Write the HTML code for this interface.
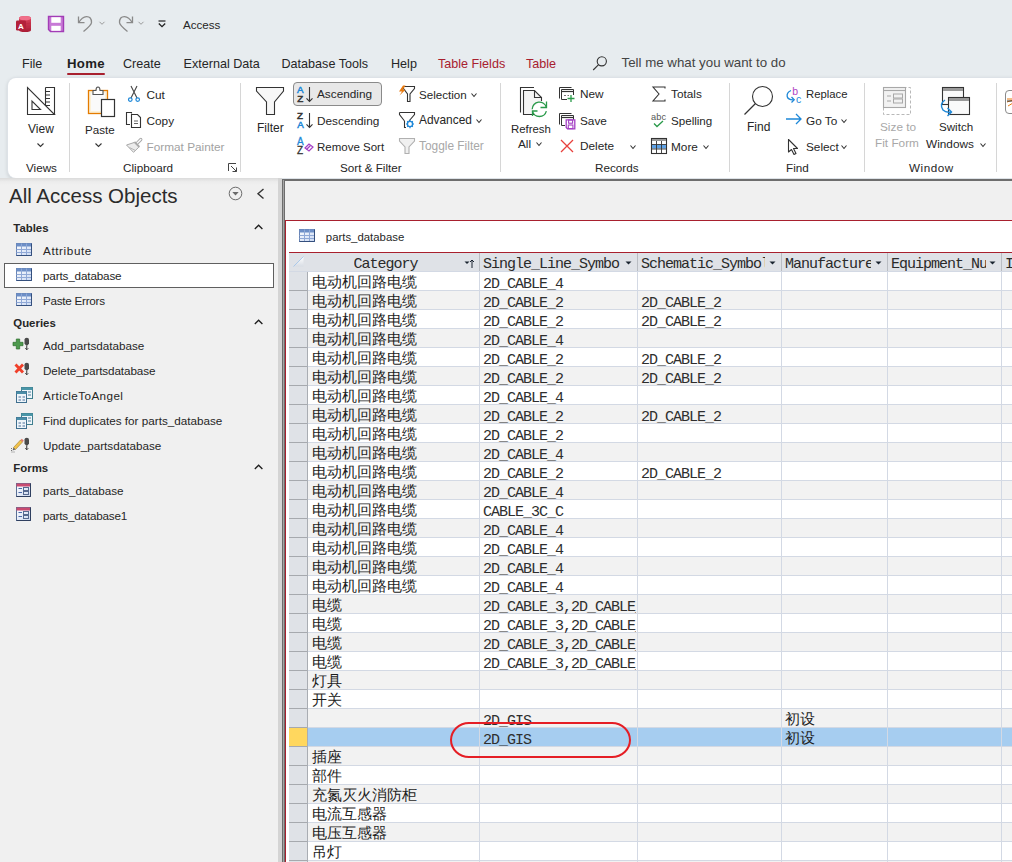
<!DOCTYPE html>
<html><head><meta charset="utf-8"><style>
html,body{margin:0;padding:0;}
body{width:1012px;height:862px;overflow:hidden;position:relative;background:#e7ecef;font-family:"Liberation Sans",sans-serif;}
.t{position:absolute;white-space:nowrap;line-height:0;height:0;}
svg{overflow:visible}
</style></head><body>
<svg style="position:absolute;left:15px;top:15px;" width="17" height="18" viewBox="0 0 17 18">
<defs><linearGradient id="ag" x1="0" x2="0" y1="0" y2="1"><stop offset="0" stop-color="#e0465e"/><stop offset="1" stop-color="#a81c34"/></linearGradient></defs>
<path d="M4 3.2 Q4 1 10 1 Q16 1 16 3.2 L16 15 Q16 17 10 17 Q4 17 4 15 Z" fill="url(#ag)"/>
<ellipse cx="10" cy="3.2" rx="6" ry="2.2" fill="#f0708a"/>
<path d="M4 8 Q10 10 16 8 M4 12 Q10 14 16 12" fill="none" stroke="#c02a44" stroke-width="0.8"/>
<rect x="1" y="5.5" width="10" height="10" rx="1.2" fill="#b3213a"/>
<text x="6" y="13.6" font-size="8" font-weight="bold" fill="#fff" text-anchor="middle" font-family="Liberation Sans">A</text>
</svg>
<svg style="position:absolute;left:47px;top:15px;" width="18" height="18" viewBox="0 0 18 18">
<path d="M1.5 1.5 H16.5 V16.5 H3.5 L1.5 14.5 Z" fill="#c77ad6" stroke="#a23cb6" stroke-width="1.4"/>
<rect x="4.3" y="2.2" width="9.4" height="5.6" fill="#fff"/>
<rect x="4.3" y="10.8" width="9.4" height="5" fill="#fff"/>

</svg>
<svg style="position:absolute;left:76px;top:14px;" width="20" height="20" viewBox="0 0 20 20">
<path d="M2.5 2.5 V8.7 H8.5" fill="none" stroke="#8a8a8a" stroke-width="1.3"/>
<path d="M2.8 8.5 Q6 3 10.5 2.6 Q15.5 2.5 15.5 8.5 Q15.5 11 7.5 17.5" fill="none" stroke="#8a8a8a" stroke-width="1.3"/>
</svg>
<svg style="position:absolute;left:98.5px;top:21px;" width="7" height="5" viewBox="0 0 7 5"><path d="M0.5 0.8 L3 3.3 L5.5 0.8" fill="none" stroke="#9a9a9a" stroke-width="1"/></svg>
<svg style="position:absolute;left:115px;top:14px;" width="20" height="20" viewBox="0 0 20 20">
<path d="M17.5 2.5 V8.7 H11.5" fill="none" stroke="#8a8a8a" stroke-width="1.3"/>
<path d="M17.2 8.5 Q14 3 9.5 2.6 Q4.5 2.5 4.5 8.5 Q4.5 11 12.5 17.5" fill="none" stroke="#8a8a8a" stroke-width="1.3"/>
</svg>
<svg style="position:absolute;left:137.5px;top:21px;" width="7" height="5" viewBox="0 0 7 5"><path d="M0.5 0.8 L3 3.3 L5.5 0.8" fill="none" stroke="#9a9a9a" stroke-width="1"/></svg>
<svg style="position:absolute;left:157px;top:19px;" width="10" height="9" viewBox="0 0 10 9"><path d="M1.5 2 H8.5" stroke="#222" stroke-width="1.2"/><path d="M1.8 4.5 L5 7.7 L8.2 4.5" fill="none" stroke="#222" stroke-width="1.3"/></svg>
<div class="t" style="left:183px;top:24.98px;font-size:11.6px;color:#262626;font-weight:normal;font-family:'Liberation Sans', sans-serif;">Access</div>
<div class="t" style="left:22px;top:63.93px;font-size:12.6px;color:#262626;font-weight:normal;font-family:'Liberation Sans', sans-serif;">File</div>
<div class="t" style="left:67px;top:63.73px;font-size:13.2px;color:#1f1f1f;font-weight:bold;font-family:'Liberation Sans', sans-serif;letter-spacing:0.3px;">Home</div>
<div class="t" style="left:123px;top:63.93px;font-size:12.6px;color:#262626;font-weight:normal;font-family:'Liberation Sans', sans-serif;">Create</div>
<div class="t" style="left:183.5px;top:63.93px;font-size:12.6px;color:#262626;font-weight:normal;font-family:'Liberation Sans', sans-serif;">External Data</div>
<div class="t" style="left:281.5px;top:63.93px;font-size:12.6px;color:#262626;font-weight:normal;font-family:'Liberation Sans', sans-serif;">Database Tools</div>
<div class="t" style="left:391px;top:63.93px;font-size:12.6px;color:#262626;font-weight:normal;font-family:'Liberation Sans', sans-serif;">Help</div>
<div class="t" style="left:438px;top:63.93px;font-size:12.6px;color:#a8202e;font-weight:normal;font-family:'Liberation Sans', sans-serif;">Table Fields</div>
<div class="t" style="left:526px;top:63.93px;font-size:12.6px;color:#a8202e;font-weight:normal;font-family:'Liberation Sans', sans-serif;">Table</div>
<div style="position:absolute;left:67px;top:72.5px;width:38px;height:2.5px;background:#a8202e;border-radius:1.5px"></div>
<svg style="position:absolute;left:592px;top:55px;" width="16" height="16" viewBox="0 0 16 16"><circle cx="9.8" cy="6.3" r="4.6" fill="none" stroke="#333" stroke-width="1.1"/><path d="M6.6 9.6 L1.2 15" stroke="#333" stroke-width="1.1"/></svg>
<div class="t" style="left:621.5px;top:63.39px;font-size:13.3px;color:#444;font-weight:normal;font-family:'Liberation Sans', sans-serif;">Tell me what you want to do</div>
<div style="position:absolute;left:8px;top:78px;width:1030px;height:100px;background:#fff;border-radius:8px;box-shadow:0 0 0 1px #dde2e7, 0 1.5px 4px rgba(0,0,0,0.16)"></div>
<div style="position:absolute;left:69px;top:83px;width:1px;height:89px;background:#d6d6d6"></div>
<div style="position:absolute;left:240px;top:83px;width:1px;height:89px;background:#d6d6d6"></div>
<div style="position:absolute;left:500px;top:83px;width:1px;height:89px;background:#d6d6d6"></div>
<div style="position:absolute;left:729px;top:83px;width:1px;height:89px;background:#d6d6d6"></div>
<div style="position:absolute;left:864px;top:83px;width:1px;height:89px;background:#d6d6d6"></div>
<div style="position:absolute;left:996px;top:83px;width:1px;height:89px;background:#d6d6d6"></div>
<div class="t" style="left:26px;top:167.95px;font-size:11.7px;color:#262626;font-weight:normal;font-family:'Liberation Sans', sans-serif;">Views</div>
<div class="t" style="left:123px;top:167.95px;font-size:11.7px;color:#262626;font-weight:normal;font-family:'Liberation Sans', sans-serif;">Clipboard</div>
<div class="t" style="left:340px;top:167.95px;font-size:11.7px;color:#262626;font-weight:normal;font-family:'Liberation Sans', sans-serif;">Sort &amp; Filter</div>
<div class="t" style="left:595px;top:167.95px;font-size:11.7px;color:#262626;font-weight:normal;font-family:'Liberation Sans', sans-serif;">Records</div>
<div class="t" style="left:786px;top:167.95px;font-size:11.7px;color:#262626;font-weight:normal;font-family:'Liberation Sans', sans-serif;">Find</div>
<div class="t" style="left:909px;top:167.95px;font-size:11.7px;color:#262626;font-weight:normal;font-family:'Liberation Sans', sans-serif;letter-spacing:0.5px;">Window</div>
<svg style="position:absolute;left:26px;top:86px;" width="30" height="30" viewBox="0 0 30 30">
<path d="M1.5 1.5 V28.5 H28.5 Z" fill="#fff" stroke="#333" stroke-width="1.1"/>
<path d="M6 15 V23.5 H14.5 Z" fill="#fff" stroke="#333" stroke-width="1.1"/>
<path d="M19.5 1.5 H28.5 V28.5" fill="none" stroke="#333" stroke-width="1.1"/>
<path d="M19.5 1.5 V19" fill="none" stroke="#333" stroke-width="1.1"/>
<path d="M19.5 5.5 H24 M19.5 9 H24 M19.5 12.5 H24 M19.5 16 H24 M19.5 19.5 H24" stroke="#333" stroke-width="1"/>
</svg>
<div class="t" style="left:28px;top:129.44px;font-size:12px;color:#262626;font-weight:normal;font-family:'Liberation Sans', sans-serif;">View</div>
<svg style="position:absolute;left:37px;top:142.5px;" width="7" height="4" viewBox="0 0 7 4"><path d="M0.5 0.5 L3.5 3.5 L6.5 0.5" fill="none" stroke="#333" stroke-width="1.1"/></svg>
<svg style="position:absolute;left:87px;top:86px;" width="30" height="32" viewBox="0 0 30 32">
<rect x="1.5" y="4.5" width="19" height="23" fill="#fdf1d6" stroke="#e47b00" stroke-width="1.3"/>
<rect x="4" y="7" width="14" height="18" fill="#fafafa" stroke="none"/>
<path d="M6 8.5 V4.5 H9 Q9 1 11 1 Q13 1 13 4.5 H16 V8.5 Z" fill="#fff" stroke="#555" stroke-width="1.1"/>
<rect x="14.5" y="13.5" width="13" height="17" fill="#fff" stroke="#333" stroke-width="1.2"/>
</svg>
<div class="t" style="left:85px;top:129.58px;font-size:11.6px;color:#262626;font-weight:normal;font-family:'Liberation Sans', sans-serif;">Paste</div>
<svg style="position:absolute;left:94.5px;top:142.5px;" width="7" height="4" viewBox="0 0 7 4"><path d="M0.5 0.5 L3.5 3.5 L6.5 0.5" fill="none" stroke="#333" stroke-width="1.1"/></svg>
<svg style="position:absolute;left:127px;top:85px;" width="14" height="18" viewBox="0 0 14 18">
<path d="M4 1 L10 13 M10 1 L4 13" stroke="#444" stroke-width="1.1"/>
<circle cx="3.3" cy="14.6" r="1.8" fill="none" stroke="#1e88d8" stroke-width="1.2"/>
<circle cx="10.7" cy="14.6" r="1.8" fill="none" stroke="#1e88d8" stroke-width="1.2"/>
</svg>
<div class="t" style="left:146.5px;top:94.91px;font-size:11.8px;color:#262626;font-weight:normal;font-family:'Liberation Sans', sans-serif;">Cut</div>
<svg style="position:absolute;left:125px;top:111px;" width="18" height="18" viewBox="0 0 18 18">
<path d="M6.5 2.5 V1.5 H1.5 V13.5 H5" fill="none" stroke="#333" stroke-width="1.1"/>
<path d="M6.5 3.5 H12.5 L15.5 6.5 V16.5 H6.5 Z" fill="#fff" stroke="#333" stroke-width="1.1"/>
<path d="M9 10 H13 M9 12.5 H13" stroke="#555" stroke-width="0.9"/>
</svg>
<div class="t" style="left:146.5px;top:120.91px;font-size:11.8px;color:#262626;font-weight:normal;font-family:'Liberation Sans', sans-serif;">Copy</div>
<svg style="position:absolute;left:125px;top:137px;" width="18" height="18" viewBox="0 0 18 18">
<path d="M12 6.3 L15.8 2.5" stroke="#a8a8a8" stroke-width="3.2" stroke-linecap="round"/>
<path d="M12 6.3 L15.8 2.5" stroke="#fafafa" stroke-width="1.4" stroke-linecap="round"/>
<path d="M9.3 5 L14.3 10" stroke="#a8a8a8" stroke-width="2.2"/>
<path d="M1.5 8 L9.2 5.5 L13.8 10.2 L8.5 15.3 Z" fill="#ececec" stroke="#a8a8a8" stroke-width="1" stroke-linejoin="round"/>
<path d="M4.5 10.5 L10.5 13.5" stroke="#b0b0b0" stroke-width="0.9"/>
</svg>
<div class="t" style="left:146.5px;top:146.61px;font-size:11.8px;color:#a2a2a2;font-weight:normal;font-family:'Liberation Sans', sans-serif;">Format Painter</div>
<svg style="position:absolute;left:228px;top:163px;" width="10" height="10" viewBox="0 0 10 10"><path d="M0.5 8 V0.5 H8" fill="none" stroke="#444" stroke-width="1"/><path d="M3 3 L8.5 8.5 M4.5 8.5 H8.5 V4.5" fill="none" stroke="#444" stroke-width="1"/></svg>
<svg style="position:absolute;left:255px;top:86px;" width="30" height="30" viewBox="0 0 30 30">
<path d="M1.5 1.5 H28.5 V5 L19.5 16 V28.5 H11.5 V16 L1.5 5 Z" fill="#f7f7f7" stroke="#333" stroke-width="1.1"/>
</svg>
<div class="t" style="left:257px;top:128.04px;font-size:12px;color:#262626;font-weight:normal;font-family:'Liberation Sans', sans-serif;">Filter</div>
<div style="position:absolute;left:293px;top:82px;width:89px;height:24px;box-sizing:border-box;background:#e8e8e8;border:1px solid #8a8a8a;border-radius:4px"></div>
<svg style="position:absolute;left:297px;top:86px;" width="15" height="17" viewBox="0 0 15 17"><text x="0" y="7.3" font-size="9.8" fill="#1e88d8" font-family="Liberation Sans" stroke="#1e88d8" stroke-width="0.5">A</text><text x="0.3" y="16" font-size="9.8" fill="#333" font-family="Liberation Sans" stroke="#333" stroke-width="0.5">Z</text><path d="M12.5 1 V15.5 M9.5 12.3 L12.5 15.5 L15.5 12.3" fill="none" stroke="#333" stroke-width="1.1"/></svg>
<div class="t" style="left:317px;top:93.91px;font-size:11.8px;color:#262626;font-weight:normal;font-family:'Liberation Sans', sans-serif;">Ascending</div>
<svg style="position:absolute;left:297px;top:112px;" width="15" height="17" viewBox="0 0 15 17"><text x="0" y="7.3" font-size="9.8" fill="#333" font-family="Liberation Sans" stroke="#333" stroke-width="0.5">Z</text><text x="0.3" y="16" font-size="9.8" fill="#1e88d8" font-family="Liberation Sans" stroke="#1e88d8" stroke-width="0.5">A</text><path d="M12.5 1 V15.5 M9.5 12.3 L12.5 15.5 L15.5 12.3" fill="none" stroke="#333" stroke-width="1.1"/></svg>
<div class="t" style="left:317px;top:120.61px;font-size:11.8px;color:#262626;font-weight:normal;font-family:'Liberation Sans', sans-serif;">Descending</div>
<svg style="position:absolute;left:297px;top:138px;" width="17" height="17" viewBox="0 0 17 17"><text x="0" y="7.2" font-size="10" fill="#1e88d8" stroke="#1e88d8" stroke-width="0.3" font-family="Liberation Sans">A</text><text x="0" y="16.2" font-size="10" fill="#333" stroke="#333" stroke-width="0.3" font-family="Liberation Sans">Z</text>
<path d="M8 10 L12 6 L16 9 L12 13 Z" fill="#fff" stroke="#a33fc4" stroke-width="1.2"/><path d="M9.5 11.5 L13.5 7.5" stroke="#a33fc4" stroke-width="1.2"/></svg>
<div class="t" style="left:317px;top:146.62px;font-size:11.5px;color:#262626;font-weight:normal;font-family:'Liberation Sans', sans-serif;">Remove Sort</div>
<svg style="position:absolute;left:398px;top:85px;" width="18" height="18" viewBox="0 0 18 18">
<path d="M5.5 1.5 H16.5 V3.5 L12 9 V16.5 H9.5 V9 L5.5 3.5 Z" fill="#fff" stroke="#333" stroke-width="1.1"/>
<path d="M5 0.5 L1 6.5 H4 L1.5 10.5 L7.5 4.8 H4.8 L7.5 0.5 Z" fill="#e87a10"/>
</svg>
<div class="t" style="left:419px;top:94.58px;font-size:11.6px;color:#262626;font-weight:normal;font-family:'Liberation Sans', sans-serif;">Selection</div>
<svg style="position:absolute;left:470.5px;top:93px;" width="6" height="4" viewBox="0 0 6 4"><path d="M0.5 0.5 L3.0 3.5 L5.5 0.5" fill="none" stroke="#333" stroke-width="1.1"/></svg>
<svg style="position:absolute;left:398px;top:111px;" width="18" height="18" viewBox="0 0 18 18">
<path d="M1.5 1.5 H16.5 V3.5 L11 10 M6.5 10 L1.5 3.5 V1.5" fill="#fff" stroke="#333" stroke-width="1.1"/>
<path d="M6.5 10 V16.5 H8" fill="none" stroke="#333" stroke-width="1.1"/>
<circle cx="12" cy="13" r="2.6" fill="none" stroke="#1e88d8" stroke-width="1.4"/>
<path d="M12 8.8 V10 M12 16 V17.2 M8 13 H9.2 M14.8 13 H16 M9.2 10.2 L10 11 M14 15 L14.8 15.8 M14.8 10.2 L14 11 M10 15 L9.2 15.8" stroke="#1e88d8" stroke-width="1.2"/>
</svg>
<div class="t" style="left:419px;top:120.48px;font-size:11.9px;color:#262626;font-weight:normal;font-family:'Liberation Sans', sans-serif;">Advanced</div>
<svg style="position:absolute;left:475.5px;top:119px;" width="6" height="4" viewBox="0 0 6 4"><path d="M0.5 0.5 L3.0 3.5 L5.5 0.5" fill="none" stroke="#333" stroke-width="1.1"/></svg>
<svg style="position:absolute;left:398px;top:137px;" width="18" height="18" viewBox="0 0 18 18">
<path d="M1.5 1.5 H16.5 V4 L11 10 V16.5 H7 V10 L1.5 4 Z" fill="#f0f0f0" stroke="#b0b0b0" stroke-width="1.1"/>
</svg>
<div class="t" style="left:419px;top:146.48px;font-size:11.9px;color:#a8a8a8;font-weight:normal;font-family:'Liberation Sans', sans-serif;">Toggle Filter</div>
<svg style="position:absolute;left:519px;top:86px;" width="30" height="32" viewBox="0 0 30 32">
<path d="M1.5 26.5 V1.5 H15" fill="none" stroke="#333" stroke-width="1.1"/>
<path d="M4.5 4.5 H15.5 L22.5 11.5 V16 Q14 17 12 28.5 H4.5 Z" fill="#f4f4f4"/>
<path d="M15 28.5 H4.5 V4.5 H15.5 L22.5 11.5 V15" fill="none" stroke="#333" stroke-width="1.1"/>
<path d="M15.5 4.5 V11.5 H22.5" fill="none" stroke="#333" stroke-width="1.1"/>
<path d="M13.2 23.3 A7.2 7.2 0 0 1 27.35 21.4" fill="none" stroke="#2a9a4a" stroke-width="1.3"/>
<path d="M27.35 25.2 A7.2 7.2 0 0 1 13.45 25.2" fill="none" stroke="#2a9a4a" stroke-width="1.3"/>
<path d="M27.5 15.5 V21.5 H21.5" fill="none" stroke="#2a9a4a" stroke-width="1.3"/>
<path d="M13.5 30 V25 H18.5" fill="none" stroke="#2a9a4a" stroke-width="1.3"/>
</svg>
<div class="t" style="left:511px;top:128.55px;font-size:11.4px;color:#262626;font-weight:normal;font-family:'Liberation Sans', sans-serif;">Refresh</div>
<div class="t" style="left:518px;top:144.31px;font-size:11.8px;color:#262626;font-weight:normal;font-family:'Liberation Sans', sans-serif;">All</div>
<svg style="position:absolute;left:535.5px;top:142px;" width="6" height="4" viewBox="0 0 6 4"><path d="M0.5 0.5 L3.0 3.5 L5.5 0.5" fill="none" stroke="#333" stroke-width="1.1"/></svg>
<svg style="position:absolute;left:558px;top:86px;" width="18" height="17" viewBox="0 0 18 17">
<path d="M1.5 12.5 V1.5 H13.5" fill="none" stroke="#333" stroke-width="1"/>
<path d="M3.5 3.5 H15.5 V9 M9 13.5 H3.5 V3.5" fill="#fff" stroke="#333" stroke-width="1"/>
<path d="M3.5 5.5 H15.5" stroke="#333" stroke-width="1.2"/>
<path d="M6 9.5 H8 M9.5 9.5 H11" stroke="#666" stroke-width="0.9"/>
<path d="M13 9 V16 M9.5 12.5 H16.5" stroke="#2a9a4a" stroke-width="1.3"/>
</svg>
<div class="t" style="left:580px;top:93.91px;font-size:11.8px;color:#262626;font-weight:normal;font-family:'Liberation Sans', sans-serif;">New</div>
<svg style="position:absolute;left:558px;top:112px;" width="18" height="17" viewBox="0 0 18 17">
<path d="M1.5 12.5 V1.5 H13.5" fill="none" stroke="#333" stroke-width="1"/>
<path d="M3.5 3.5 H15.5 V8 M7 13.5 H3.5 V3.5" fill="#fff" stroke="#333" stroke-width="1"/>
<path d="M3.5 5.5 H15.5" stroke="#333" stroke-width="1.2"/>
<path d="M8.2 7.8 H16.8 V16.8 H9.5 L8.2 15.5 Z" fill="#fff" stroke="#a33fc4" stroke-width="1.3"/>
<rect x="10.6" y="8" width="4" height="3.2" fill="none" stroke="#a33fc4" stroke-width="1.1"/>
<rect x="10.3" y="13" width="4.6" height="3.6" fill="none" stroke="#a33fc4" stroke-width="1.1"/>
</svg>
<div class="t" style="left:580px;top:120.51px;font-size:11.8px;color:#262626;font-weight:normal;font-family:'Liberation Sans', sans-serif;">Save</div>
<svg style="position:absolute;left:560px;top:139px;" width="14" height="14" viewBox="0 0 14 14"><path d="M1 1 L13 13 M13 1 L1 13" stroke="#e8403c" stroke-width="1.3"/></svg>
<div class="t" style="left:580px;top:146.41px;font-size:11.8px;color:#262626;font-weight:normal;font-family:'Liberation Sans', sans-serif;">Delete</div>
<svg style="position:absolute;left:630px;top:145px;" width="6" height="4" viewBox="0 0 6 4"><path d="M0.5 0.5 L3.0 3.5 L5.5 0.5" fill="none" stroke="#333" stroke-width="1.1"/></svg>
<svg style="position:absolute;left:652px;top:86px;" width="14" height="16" viewBox="0 0 14 16"><path d="M13 2.5 V1 H1 L7 8 L1 15 H13 V13.5" fill="none" stroke="#333" stroke-width="1.1"/></svg>
<div class="t" style="left:671px;top:93.91px;font-size:11.8px;color:#262626;font-weight:normal;font-family:'Liberation Sans', sans-serif;">Totals</div>
<svg style="position:absolute;left:651px;top:112px;" width="17" height="17" viewBox="0 0 17 17"><text x="0" y="7.5" font-size="9.2" fill="#555" font-family="Liberation Sans" textLength="15">abc</text>
<path d="M3 11.5 L6 14.5 L12 9" fill="none" stroke="#2a9a4a" stroke-width="1.3"/></svg>
<div class="t" style="left:671px;top:120.58px;font-size:11.6px;color:#262626;font-weight:normal;font-family:'Liberation Sans', sans-serif;">Spelling</div>
<svg style="position:absolute;left:650px;top:137px;" width="18" height="18" viewBox="0 0 18 18">
<rect x="1.5" y="1.5" width="15" height="15" fill="#fff" stroke="#333" stroke-width="1.1"/>
<rect x="2" y="2" width="14" height="2" fill="#999"/>
<rect x="2" y="8" width="14" height="3.5" fill="#5ea2e6"/>
<path d="M1.5 7.5 H16.5 M1.5 12 H16.5 M6.5 4 V16.5 M11.5 4 V16.5" stroke="#333" stroke-width="0.9"/>
</svg>
<div class="t" style="left:671px;top:146.51px;font-size:11.8px;color:#262626;font-weight:normal;font-family:'Liberation Sans', sans-serif;">More</div>
<svg style="position:absolute;left:703px;top:145px;" width="6" height="4" viewBox="0 0 6 4"><path d="M0.5 0.5 L3.0 3.5 L5.5 0.5" fill="none" stroke="#333" stroke-width="1.1"/></svg>
<svg style="position:absolute;left:743px;top:86px;" width="32" height="32" viewBox="0 0 32 32">
<circle cx="19.5" cy="10.5" r="10" fill="#fff" stroke="#333" stroke-width="1.1"/>
<path d="M12.5 17.5 L1.5 28.5" stroke="#333" stroke-width="1.2"/>
</svg>
<div class="t" style="left:747px;top:126.84px;font-size:12px;color:#262626;font-weight:normal;font-family:'Liberation Sans', sans-serif;">Find</div>
<svg style="position:absolute;left:785px;top:85px;" width="18" height="19" viewBox="0 0 18 19">
<path d="M6 5.5 Q1.5 7.5 2.2 11.5 Q3 15 8.5 14.8" fill="none" stroke="#1e88d8" stroke-width="1.3"/>
<path d="M6.5 12 L9.2 14.8 L6.5 17.5" fill="none" stroke="#1e88d8" stroke-width="1.3"/>
<text x="7.2" y="9.5" font-size="10.5" fill="#b03fc4" font-family="Liberation Sans">b</text>
<text x="11" y="18" font-size="10.5" fill="#1e88d8" font-family="Liberation Sans">c</text>
</svg>
<div class="t" style="left:806px;top:94.08px;font-size:11.3px;color:#262626;font-weight:normal;font-family:'Liberation Sans', sans-serif;">Replace</div>
<svg style="position:absolute;left:785px;top:112px;" width="18" height="14" viewBox="0 0 18 14"><path d="M1 7 H16 M11 2 L16 7 L11 12" fill="none" stroke="#1e88d8" stroke-width="1.3"/></svg>
<div class="t" style="left:806px;top:120.51px;font-size:11.8px;color:#262626;font-weight:normal;font-family:'Liberation Sans', sans-serif;">Go To</div>
<svg style="position:absolute;left:841px;top:119px;" width="6" height="4" viewBox="0 0 6 4"><path d="M0.5 0.5 L3.0 3.5 L5.5 0.5" fill="none" stroke="#333" stroke-width="1.1"/></svg>
<svg style="position:absolute;left:787px;top:138px;" width="13" height="18" viewBox="0 0 13 18"><path d="M1.5 1.5 V14 L4.5 11.5 L7 16.5 L9 15.5 L6.5 10.5 H10.5 Z" fill="#fff" stroke="#333" stroke-width="1.1" stroke-linejoin="round"/></svg>
<div class="t" style="left:806px;top:146.51px;font-size:11.8px;color:#262626;font-weight:normal;font-family:'Liberation Sans', sans-serif;">Select</div>
<svg style="position:absolute;left:841px;top:145px;" width="6" height="4" viewBox="0 0 6 4"><path d="M0.5 0.5 L3.0 3.5 L5.5 0.5" fill="none" stroke="#333" stroke-width="1.1"/></svg>
<svg style="position:absolute;left:882px;top:86px;" width="30" height="30" viewBox="0 0 30 30">
<rect x="1.5" y="1.5" width="27" height="27" fill="none" stroke="#b8b8b8" stroke-width="1" stroke-dasharray="3 2"/>
<rect x="1.5" y="1.5" width="22" height="20" fill="#f2f2f2" stroke="#a8a8a8" stroke-width="1.1"/>
<path d="M1.5 4.5 H23.5" stroke="#a8a8a8" stroke-width="1.1"/>
<path d="M5 10 H9 M5 15 H9" stroke="#a8a8a8" stroke-width="1"/>
<rect x="11.5" y="8" width="9" height="4" fill="none" stroke="#a8a8a8" stroke-width="1"/>
<rect x="11.5" y="13" width="9" height="4" fill="none" stroke="#a8a8a8" stroke-width="1"/>
</svg>
<div class="t" style="left:880px;top:127.21px;font-size:11.8px;color:#a8a8a8;font-weight:normal;font-family:'Liberation Sans', sans-serif;">Size to</div>
<div class="t" style="left:875px;top:142.91px;font-size:11.8px;color:#a8a8a8;font-weight:normal;font-family:'Liberation Sans', sans-serif;">Fit Form</div>
<svg style="position:absolute;left:939px;top:86px;" width="32" height="32" viewBox="0 0 32 32">
<rect x="3.5" y="1.5" width="21" height="17" fill="#fafafa" stroke="#333" stroke-width="1.1"/>
<rect x="4" y="2" width="20" height="3" fill="#999"/>
<rect x="9.5" y="11.5" width="21" height="17" fill="#fafafa" stroke="#333" stroke-width="1.1"/>
<rect x="10" y="12" width="20" height="3" fill="#999"/>
<path d="M6 14 Q0 18 4 24 Q7 27 12 26" fill="none" stroke="#1e88d8" stroke-width="1.4"/>
<path d="M8.5 22 L12.5 26 L8.5 30" fill="none" stroke="#1e88d8" stroke-width="1.4"/>
</svg>
<div class="t" style="left:939px;top:127.38px;font-size:11.6px;color:#262626;font-weight:normal;font-family:'Liberation Sans', sans-serif;">Switch</div>
<div class="t" style="left:926px;top:143.51px;font-size:11.8px;color:#262626;font-weight:normal;font-family:'Liberation Sans', sans-serif;">Windows</div>
<svg style="position:absolute;left:979.5px;top:142.5px;" width="6" height="4" viewBox="0 0 6 4"><path d="M0.5 0.5 L3.0 3.5 L5.5 0.5" fill="none" stroke="#333" stroke-width="1.1"/></svg>
<div style="position:absolute;left:1005px;top:90px;width:20px;height:24px;box-sizing:border-box;border:1px solid #8a8a8a;border-radius:4px;background:#fff"></div>
<svg style="position:absolute;left:1007px;top:97px;" width="6" height="10" viewBox="0 0 6 10"><path d="M0 2 H6 M0 5 L6 3 M1 9 L6 6" stroke="#e87a10" stroke-width="1"/><path d="M0 4 H6" stroke="#333" stroke-width="1"/></svg>
<div style="position:absolute;left:0px;top:178px;width:278px;height:684px;background:#f0f0f0"></div>
<div style="position:absolute;left:0px;top:178px;width:282px;height:7px;background:linear-gradient(rgba(0,0,0,0.09),rgba(0,0,0,0.02) 50%,rgba(0,0,0,0))"></div>
<div class="t" style="left:9px;top:195.60px;font-size:20.5px;color:#2b2b2b;font-weight:normal;font-family:'Liberation Sans', sans-serif;">All Access Objects</div>
<svg style="position:absolute;left:228px;top:186px;" width="15" height="15" viewBox="0 0 15 15"><circle cx="7.5" cy="7.5" r="6.3" fill="none" stroke="#6b6b6b" stroke-width="1"/><path d="M4.3 6 H10.7 L7.5 9.5 Z" fill="#6b6b6b"/></svg>
<svg style="position:absolute;left:256px;top:188px;" width="9" height="12" viewBox="0 0 9 12"><path d="M7.5 1 L2 5.8 L7.5 10.5" fill="none" stroke="#333" stroke-width="1.4"/></svg>
<div class="t" style="left:13.3px;top:228.05px;font-size:11.4px;color:#262626;font-weight:bold;font-family:'Liberation Sans', sans-serif;">Tables</div>
<svg style="position:absolute;left:253.5px;top:223.5px;" width="11" height="7" viewBox="0 0 11 7"><path d="M0.8 5 L4.6 1.2 L8.4 5" fill="none" stroke="#1e1e1e" stroke-width="1.3"/></svg>
<div class="t" style="left:13.3px;top:323.05px;font-size:11.4px;color:#262626;font-weight:bold;font-family:'Liberation Sans', sans-serif;">Queries</div>
<svg style="position:absolute;left:253.5px;top:318.5px;" width="11" height="7" viewBox="0 0 11 7"><path d="M0.8 5 L4.6 1.2 L8.4 5" fill="none" stroke="#1e1e1e" stroke-width="1.3"/></svg>
<div class="t" style="left:13.3px;top:468.05px;font-size:11.4px;color:#262626;font-weight:bold;font-family:'Liberation Sans', sans-serif;">Forms</div>
<svg style="position:absolute;left:253.5px;top:463.5px;" width="11" height="7" viewBox="0 0 11 7"><path d="M0.8 5 L4.6 1.2 L8.4 5" fill="none" stroke="#1e1e1e" stroke-width="1.3"/></svg>
<div style="position:absolute;left:4px;top:263px;width:270px;height:25px;box-sizing:border-box;background:#fff;border:1px solid #5f5f5f"></div>
<div class="t" style="left:43px;top:250.95px;font-size:11.7px;color:#262626;font-weight:normal;font-family:'Liberation Sans', sans-serif;letter-spacing:0.6px;">Attribute</div>
<svg style="position:absolute;left:16px;top:243px;" width="16" height="13" viewBox="0 0 16 13"><defs><linearGradient id="tg" x1="0" y1="0" x2="1" y2="1"><stop offset="0" stop-color="#ffffff"/><stop offset="1" stop-color="#c9d8f2"/></linearGradient></defs>
<rect x="0.5" y="0.5" width="15" height="12" fill="url(#tg)" stroke="#6a85b5" stroke-width="1"/>
<rect x="0.5" y="0.5" width="15" height="3" fill="#6d8fc7"/>
<path d="M0.5 6.5 H15.5 M0.5 9.5 H15.5 M5.5 0.5 V12.5 M10.5 0.5 V12.5" stroke="#8fa8d6" stroke-width="1"/>
<path d="M0.5 12.5 H15.5 V0.5" fill="none" stroke="#344f7d" stroke-width="1"/></svg>
<div class="t" style="left:43px;top:275.95px;font-size:11.7px;color:#262626;font-weight:normal;font-family:'Liberation Sans', sans-serif;letter-spacing:-0.15px;">parts_database</div>
<svg style="position:absolute;left:16px;top:268px;" width="16" height="13" viewBox="0 0 16 13"><defs><linearGradient id="tg" x1="0" y1="0" x2="1" y2="1"><stop offset="0" stop-color="#ffffff"/><stop offset="1" stop-color="#c9d8f2"/></linearGradient></defs>
<rect x="0.5" y="0.5" width="15" height="12" fill="url(#tg)" stroke="#6a85b5" stroke-width="1"/>
<rect x="0.5" y="0.5" width="15" height="3" fill="#6d8fc7"/>
<path d="M0.5 6.5 H15.5 M0.5 9.5 H15.5 M5.5 0.5 V12.5 M10.5 0.5 V12.5" stroke="#8fa8d6" stroke-width="1"/>
<path d="M0.5 12.5 H15.5 V0.5" fill="none" stroke="#344f7d" stroke-width="1"/></svg>
<div class="t" style="left:43px;top:300.95px;font-size:11.7px;color:#262626;font-weight:normal;font-family:'Liberation Sans', sans-serif;letter-spacing:-0.27px;">Paste Errors</div>
<svg style="position:absolute;left:16px;top:293px;" width="16" height="13" viewBox="0 0 16 13"><defs><linearGradient id="tg" x1="0" y1="0" x2="1" y2="1"><stop offset="0" stop-color="#ffffff"/><stop offset="1" stop-color="#c9d8f2"/></linearGradient></defs>
<rect x="0.5" y="0.5" width="15" height="12" fill="url(#tg)" stroke="#6a85b5" stroke-width="1"/>
<rect x="0.5" y="0.5" width="15" height="3" fill="#6d8fc7"/>
<path d="M0.5 6.5 H15.5 M0.5 9.5 H15.5 M5.5 0.5 V12.5 M10.5 0.5 V12.5" stroke="#8fa8d6" stroke-width="1"/>
<path d="M0.5 12.5 H15.5 V0.5" fill="none" stroke="#344f7d" stroke-width="1"/></svg>
<div class="t" style="left:43px;top:346.45px;font-size:11.7px;color:#262626;font-weight:normal;font-family:'Liberation Sans', sans-serif;">Add_partsdatabase</div>
<svg style="position:absolute;left:12px;top:337px;" width="18" height="14" viewBox="0 0 18 14"><path d="M4.3 2 H7.7 V5.3 H11 V8.7 H7.7 V12 H4.3 V8.7 H1 V5.3 H4.3 Z" fill="#4e9a4e" stroke="#2f6e2f" stroke-width="0.7"/><path d="M12.5 2.5 Q12.5 0.8 14.8 0.8 Q17 0.8 17 2.5 V6.8 L15.3 8.5 H14.2 L12.5 6.8 Z" fill="#4a4a4a"/><path d="M14.75 8.5 V12.5 M13.3 11.3 L14.75 12.8 L16.2 11.3" fill="none" stroke="#333" stroke-width="1"/></svg>
<div class="t" style="left:43px;top:371.45px;font-size:11.7px;color:#262626;font-weight:normal;font-family:'Liberation Sans', sans-serif;letter-spacing:-0.1px;">Delete_partsdatabase</div>
<svg style="position:absolute;left:12px;top:362px;" width="18" height="14" viewBox="0 0 18 14"><path d="M3.5 2.5 L11 10.5 M11 2.5 L3.5 10.5" stroke="#f0402a" stroke-width="2.8"/><path d="M12.5 2.5 Q12.5 0.8 14.8 0.8 Q17 0.8 17 2.5 V6.8 L15.3 8.5 H14.2 L12.5 6.8 Z" fill="#4a4a4a"/><path d="M14.75 8.5 V12.5 M13.3 11.3 L14.75 12.8 L16.2 11.3" fill="none" stroke="#333" stroke-width="1"/></svg>
<div class="t" style="left:43px;top:396.45px;font-size:11.7px;color:#262626;font-weight:normal;font-family:'Liberation Sans', sans-serif;letter-spacing:0.4px;">ArticleToAngel</div>
<svg style="position:absolute;left:16px;top:387px;" width="17" height="16" viewBox="0 0 17 16"><rect x="5.5" y="0.5" width="11" height="11" fill="#eef5fa" stroke="#3f7f8f" stroke-width="1"/><rect x="5.5" y="0.5" width="11" height="2.5" fill="#4a96a8"/>
<path d="M12 5 H15 M12 8 H15" stroke="#4a7f9a" stroke-width="1"/>
<rect x="0.5" y="4.5" width="10" height="11" fill="#eef5fa" stroke="#3f6f8f" stroke-width="1"/><rect x="0.5" y="4.5" width="10" height="2.5" fill="#4a8ea8"/>
<path d="M2.5 10 H5 M6.5 10 H9 M2.5 13 H5 M6.5 13 H9" stroke="#4a6f9a" stroke-width="1"/></svg>
<div class="t" style="left:43px;top:421.45px;font-size:11.7px;color:#262626;font-weight:normal;font-family:'Liberation Sans', sans-serif;">Find duplicates for parts_database</div>
<svg style="position:absolute;left:16px;top:413px;" width="17" height="16" viewBox="0 0 17 16"><rect x="5.5" y="0.5" width="11" height="11" fill="#eef5fa" stroke="#3f7f8f" stroke-width="1"/><rect x="5.5" y="0.5" width="11" height="2.5" fill="#4a96a8"/>
<path d="M12 5 H15 M12 8 H15" stroke="#4a7f9a" stroke-width="1"/>
<rect x="0.5" y="4.5" width="10" height="11" fill="#eef5fa" stroke="#3f6f8f" stroke-width="1"/><rect x="0.5" y="4.5" width="10" height="2.5" fill="#4a8ea8"/>
<path d="M2.5 10 H5 M6.5 10 H9 M2.5 13 H5 M6.5 13 H9" stroke="#4a6f9a" stroke-width="1"/></svg>
<div class="t" style="left:43px;top:446.45px;font-size:11.7px;color:#262626;font-weight:normal;font-family:'Liberation Sans', sans-serif;">Update_partsdatabase</div>
<svg style="position:absolute;left:11px;top:437px;" width="20" height="16" viewBox="0 0 20 16"><path d="M2.5 10.5 L9.5 3 L11.5 5 L4.5 12.5 Z" fill="#f2c24a" stroke="#9a7a2a" stroke-width="0.6"/><path d="M9.5 3 L10.8 1.7 L12.8 3.7 L11.5 5 Z" fill="#e07a6a"/>
<path d="M2.5 10.5 L1.5 13.5 L4.5 12.5" fill="#666"/>
<path d="M0.5 11 V15 M0.5 15 H3.5" stroke="#555" stroke-width="0.8" stroke-dasharray="1 1"/>
<g transform="translate(1,0)"><path d="M12.5 2.5 Q12.5 0.8 14.8 0.8 Q17 0.8 17 2.5 V6.8 L15.3 8.5 H14.2 L12.5 6.8 Z" fill="#4a4a4a"/><path d="M14.75 8.5 V12.5 M13.3 11.3 L14.75 12.8 L16.2 11.3" fill="none" stroke="#333" stroke-width="1"/></g></svg>
<div class="t" style="left:43px;top:491.45px;font-size:11.7px;color:#262626;font-weight:normal;font-family:'Liberation Sans', sans-serif;">parts_database</div>
<svg style="position:absolute;left:16px;top:483px;" width="16" height="15" viewBox="0 0 16 15"><defs><linearGradient id="fg" x1="0" y1="0" x2="1" y2="1"><stop offset="0" stop-color="#ffffff"/><stop offset="1" stop-color="#cdd9f0"/></linearGradient></defs>
<rect x="0.5" y="0.5" width="14" height="13" fill="url(#fg)" stroke="#5a6f95" stroke-width="1"/>
<rect x="0.5" y="0.5" width="14" height="3" fill="#c94a70"/>
<path d="M2.5 5.5 H6 M2.5 9.5 H6" stroke="#4a68a8" stroke-width="1"/>
<rect x="7.5" y="4.5" width="5" height="3" fill="none" stroke="#56698f" stroke-width="1"/>
<rect x="7.5" y="8.5" width="5" height="3" fill="none" stroke="#56698f" stroke-width="1"/>
<path d="M0.5 13.5 H14.5 V0.5" fill="none" stroke="#2f3f5f" stroke-width="1"/></svg>
<div class="t" style="left:43px;top:516.45px;font-size:11.7px;color:#262626;font-weight:normal;font-family:'Liberation Sans', sans-serif;letter-spacing:-0.2px;">parts_database1</div>
<svg style="position:absolute;left:16px;top:507px;" width="16" height="15" viewBox="0 0 16 15"><defs><linearGradient id="fg" x1="0" y1="0" x2="1" y2="1"><stop offset="0" stop-color="#ffffff"/><stop offset="1" stop-color="#cdd9f0"/></linearGradient></defs>
<rect x="0.5" y="0.5" width="14" height="13" fill="url(#fg)" stroke="#5a6f95" stroke-width="1"/>
<rect x="0.5" y="0.5" width="14" height="3" fill="#c94a70"/>
<path d="M2.5 5.5 H6 M2.5 9.5 H6" stroke="#4a68a8" stroke-width="1"/>
<rect x="7.5" y="4.5" width="5" height="3" fill="none" stroke="#56698f" stroke-width="1"/>
<rect x="7.5" y="8.5" width="5" height="3" fill="none" stroke="#56698f" stroke-width="1"/>
<path d="M0.5 13.5 H14.5 V0.5" fill="none" stroke="#2f3f5f" stroke-width="1"/></svg>
<div style="position:absolute;left:278px;top:178px;width:4px;height:684px;background:#d4d4d4"></div>
<div style="position:absolute;left:282px;top:179px;width:730px;height:2px;background:#6d6d6d"></div>
<div style="position:absolute;left:282px;top:179px;width:1px;height:683px;background:#6d6d6d"></div>
<div style="position:absolute;left:283px;top:180px;width:1px;height:682px;background:#a5a5a5"></div>
<div style="position:absolute;left:284px;top:180px;width:1px;height:682px;background:#6d6d6d"></div>
<div style="position:absolute;left:285px;top:181px;width:727px;height:39px;background:#f0f0f0"></div>
<div style="position:absolute;left:285px;top:220px;width:727px;height:642px;background:#fff"></div>
<div style="position:absolute;left:285px;top:220px;width:727px;height:1px;background:#a8202e"></div>
<div style="position:absolute;left:285px;top:220px;width:1px;height:642px;background:#a8202e"></div>
<svg style="position:absolute;left:299px;top:229px;" width="16" height="13" viewBox="0 0 16 13"><defs><linearGradient id="tg2" x1="0" y1="0" x2="1" y2="1"><stop offset="0" stop-color="#ffffff"/><stop offset="1" stop-color="#c9d8f2"/></linearGradient></defs>
<rect x="0.5" y="0.5" width="15" height="12" fill="url(#tg2)" stroke="#6a85b5" stroke-width="1"/>
<rect x="0.5" y="0.5" width="15" height="3" fill="#6d8fc7"/>
<path d="M0.5 6.5 H15.5 M0.5 9.5 H15.5 M5.5 0.5 V12.5 M10.5 0.5 V12.5" stroke="#8fa8d6" stroke-width="1"/>
<path d="M0.5 12.5 H15.5 V0.5" fill="none" stroke="#344f7d" stroke-width="1"/></svg>
<div class="t" style="left:325.8px;top:237.05px;font-size:11.4px;color:#262626;font-weight:normal;font-family:'Liberation Sans', sans-serif;">parts_database</div>
<div style="position:absolute;left:289px;top:252px;width:723px;height:1px;background:#a8202e"></div>
<div style="position:absolute;left:289px;top:253px;width:723px;height:18px;background:#dfe2e7"></div>
<div style="position:absolute;left:289px;top:271px;width:723px;height:1px;background:#d3d9e4"></div>
<svg style="position:absolute;left:290px;top:254px;" width="16" height="16" viewBox="0 0 16 16"><defs><linearGradient id="cg" x1="0" y1="0" x2="0" y2="1"><stop offset="0" stop-color="#ffffff"/><stop offset="1" stop-color="#d8dde4"/></linearGradient></defs><path d="M13.5 2.5 V12.5 H3.5 Z" fill="url(#cg)"/><path d="M13.5 2.5 L3.5 12.5" stroke="#9cc2ea" stroke-width="0.8"/></svg>
<div style="position:absolute;left:479px;top:253px;width:1px;height:18px;background:#b9bdc3"></div>
<div style="position:absolute;left:637px;top:253px;width:1px;height:18px;background:#b9bdc3"></div>
<div style="position:absolute;left:781px;top:253px;width:1px;height:18px;background:#b9bdc3"></div>
<div style="position:absolute;left:887px;top:253px;width:1px;height:18px;background:#b9bdc3"></div>
<div style="position:absolute;left:1001px;top:253px;width:1px;height:18px;background:#b9bdc3"></div>
<div style="position:absolute;left:308px;top:272px;width:704px;height:18px;background:#ffffff"></div>
<div style="position:absolute;left:289px;top:272px;width:18px;height:18px;background:#dfe2e7"></div>
<div style="position:absolute;left:308px;top:290px;width:704px;height:1px;background:#d3d9e4"></div>
<div style="position:absolute;left:289px;top:290px;width:18px;height:1px;background:#a6a9ae"></div>
<div style="position:absolute;left:308px;top:291px;width:704px;height:18px;background:#f2f2f2"></div>
<div style="position:absolute;left:289px;top:291px;width:18px;height:18px;background:#dfe2e7"></div>
<div style="position:absolute;left:308px;top:309px;width:704px;height:1px;background:#d3d9e4"></div>
<div style="position:absolute;left:289px;top:309px;width:18px;height:1px;background:#a6a9ae"></div>
<div style="position:absolute;left:308px;top:310px;width:704px;height:18px;background:#ffffff"></div>
<div style="position:absolute;left:289px;top:310px;width:18px;height:18px;background:#dfe2e7"></div>
<div style="position:absolute;left:308px;top:328px;width:704px;height:1px;background:#d3d9e4"></div>
<div style="position:absolute;left:289px;top:328px;width:18px;height:1px;background:#a6a9ae"></div>
<div style="position:absolute;left:308px;top:329px;width:704px;height:18px;background:#f2f2f2"></div>
<div style="position:absolute;left:289px;top:329px;width:18px;height:18px;background:#dfe2e7"></div>
<div style="position:absolute;left:308px;top:347px;width:704px;height:1px;background:#d3d9e4"></div>
<div style="position:absolute;left:289px;top:347px;width:18px;height:1px;background:#a6a9ae"></div>
<div style="position:absolute;left:308px;top:348px;width:704px;height:18px;background:#ffffff"></div>
<div style="position:absolute;left:289px;top:348px;width:18px;height:18px;background:#dfe2e7"></div>
<div style="position:absolute;left:308px;top:366px;width:704px;height:1px;background:#d3d9e4"></div>
<div style="position:absolute;left:289px;top:366px;width:18px;height:1px;background:#a6a9ae"></div>
<div style="position:absolute;left:308px;top:367px;width:704px;height:18px;background:#f2f2f2"></div>
<div style="position:absolute;left:289px;top:367px;width:18px;height:18px;background:#dfe2e7"></div>
<div style="position:absolute;left:308px;top:385px;width:704px;height:1px;background:#d3d9e4"></div>
<div style="position:absolute;left:289px;top:385px;width:18px;height:1px;background:#a6a9ae"></div>
<div style="position:absolute;left:308px;top:386px;width:704px;height:18px;background:#ffffff"></div>
<div style="position:absolute;left:289px;top:386px;width:18px;height:18px;background:#dfe2e7"></div>
<div style="position:absolute;left:308px;top:404px;width:704px;height:1px;background:#d3d9e4"></div>
<div style="position:absolute;left:289px;top:404px;width:18px;height:1px;background:#a6a9ae"></div>
<div style="position:absolute;left:308px;top:405px;width:704px;height:18px;background:#f2f2f2"></div>
<div style="position:absolute;left:289px;top:405px;width:18px;height:18px;background:#dfe2e7"></div>
<div style="position:absolute;left:308px;top:423px;width:704px;height:1px;background:#d3d9e4"></div>
<div style="position:absolute;left:289px;top:423px;width:18px;height:1px;background:#a6a9ae"></div>
<div style="position:absolute;left:308px;top:424px;width:704px;height:18px;background:#ffffff"></div>
<div style="position:absolute;left:289px;top:424px;width:18px;height:18px;background:#dfe2e7"></div>
<div style="position:absolute;left:308px;top:442px;width:704px;height:1px;background:#d3d9e4"></div>
<div style="position:absolute;left:289px;top:442px;width:18px;height:1px;background:#a6a9ae"></div>
<div style="position:absolute;left:308px;top:443px;width:704px;height:18px;background:#f2f2f2"></div>
<div style="position:absolute;left:289px;top:443px;width:18px;height:18px;background:#dfe2e7"></div>
<div style="position:absolute;left:308px;top:461px;width:704px;height:1px;background:#d3d9e4"></div>
<div style="position:absolute;left:289px;top:461px;width:18px;height:1px;background:#a6a9ae"></div>
<div style="position:absolute;left:308px;top:462px;width:704px;height:18px;background:#ffffff"></div>
<div style="position:absolute;left:289px;top:462px;width:18px;height:18px;background:#dfe2e7"></div>
<div style="position:absolute;left:308px;top:480px;width:704px;height:1px;background:#d3d9e4"></div>
<div style="position:absolute;left:289px;top:480px;width:18px;height:1px;background:#a6a9ae"></div>
<div style="position:absolute;left:308px;top:481px;width:704px;height:18px;background:#f2f2f2"></div>
<div style="position:absolute;left:289px;top:481px;width:18px;height:18px;background:#dfe2e7"></div>
<div style="position:absolute;left:308px;top:499px;width:704px;height:1px;background:#d3d9e4"></div>
<div style="position:absolute;left:289px;top:499px;width:18px;height:1px;background:#a6a9ae"></div>
<div style="position:absolute;left:308px;top:500px;width:704px;height:18px;background:#ffffff"></div>
<div style="position:absolute;left:289px;top:500px;width:18px;height:18px;background:#dfe2e7"></div>
<div style="position:absolute;left:308px;top:518px;width:704px;height:1px;background:#d3d9e4"></div>
<div style="position:absolute;left:289px;top:518px;width:18px;height:1px;background:#a6a9ae"></div>
<div style="position:absolute;left:308px;top:519px;width:704px;height:18px;background:#f2f2f2"></div>
<div style="position:absolute;left:289px;top:519px;width:18px;height:18px;background:#dfe2e7"></div>
<div style="position:absolute;left:308px;top:537px;width:704px;height:1px;background:#d3d9e4"></div>
<div style="position:absolute;left:289px;top:537px;width:18px;height:1px;background:#a6a9ae"></div>
<div style="position:absolute;left:308px;top:538px;width:704px;height:18px;background:#ffffff"></div>
<div style="position:absolute;left:289px;top:538px;width:18px;height:18px;background:#dfe2e7"></div>
<div style="position:absolute;left:308px;top:556px;width:704px;height:1px;background:#d3d9e4"></div>
<div style="position:absolute;left:289px;top:556px;width:18px;height:1px;background:#a6a9ae"></div>
<div style="position:absolute;left:308px;top:557px;width:704px;height:18px;background:#f2f2f2"></div>
<div style="position:absolute;left:289px;top:557px;width:18px;height:18px;background:#dfe2e7"></div>
<div style="position:absolute;left:308px;top:575px;width:704px;height:1px;background:#d3d9e4"></div>
<div style="position:absolute;left:289px;top:575px;width:18px;height:1px;background:#a6a9ae"></div>
<div style="position:absolute;left:308px;top:576px;width:704px;height:18px;background:#ffffff"></div>
<div style="position:absolute;left:289px;top:576px;width:18px;height:18px;background:#dfe2e7"></div>
<div style="position:absolute;left:308px;top:594px;width:704px;height:1px;background:#d3d9e4"></div>
<div style="position:absolute;left:289px;top:594px;width:18px;height:1px;background:#a6a9ae"></div>
<div style="position:absolute;left:308px;top:595px;width:704px;height:18px;background:#f2f2f2"></div>
<div style="position:absolute;left:289px;top:595px;width:18px;height:18px;background:#dfe2e7"></div>
<div style="position:absolute;left:308px;top:613px;width:704px;height:1px;background:#d3d9e4"></div>
<div style="position:absolute;left:289px;top:613px;width:18px;height:1px;background:#a6a9ae"></div>
<div style="position:absolute;left:308px;top:614px;width:704px;height:18px;background:#ffffff"></div>
<div style="position:absolute;left:289px;top:614px;width:18px;height:18px;background:#dfe2e7"></div>
<div style="position:absolute;left:308px;top:632px;width:704px;height:1px;background:#d3d9e4"></div>
<div style="position:absolute;left:289px;top:632px;width:18px;height:1px;background:#a6a9ae"></div>
<div style="position:absolute;left:308px;top:633px;width:704px;height:18px;background:#f2f2f2"></div>
<div style="position:absolute;left:289px;top:633px;width:18px;height:18px;background:#dfe2e7"></div>
<div style="position:absolute;left:308px;top:651px;width:704px;height:1px;background:#d3d9e4"></div>
<div style="position:absolute;left:289px;top:651px;width:18px;height:1px;background:#a6a9ae"></div>
<div style="position:absolute;left:308px;top:652px;width:704px;height:18px;background:#ffffff"></div>
<div style="position:absolute;left:289px;top:652px;width:18px;height:18px;background:#dfe2e7"></div>
<div style="position:absolute;left:308px;top:670px;width:704px;height:1px;background:#d3d9e4"></div>
<div style="position:absolute;left:289px;top:670px;width:18px;height:1px;background:#a6a9ae"></div>
<div style="position:absolute;left:308px;top:671px;width:704px;height:18px;background:#f2f2f2"></div>
<div style="position:absolute;left:289px;top:671px;width:18px;height:18px;background:#dfe2e7"></div>
<div style="position:absolute;left:308px;top:689px;width:704px;height:1px;background:#d3d9e4"></div>
<div style="position:absolute;left:289px;top:689px;width:18px;height:1px;background:#a6a9ae"></div>
<div style="position:absolute;left:308px;top:690px;width:704px;height:18px;background:#ffffff"></div>
<div style="position:absolute;left:289px;top:690px;width:18px;height:18px;background:#dfe2e7"></div>
<div style="position:absolute;left:308px;top:708px;width:704px;height:1px;background:#d3d9e4"></div>
<div style="position:absolute;left:289px;top:708px;width:18px;height:1px;background:#a6a9ae"></div>
<div style="position:absolute;left:308px;top:709px;width:704px;height:18px;background:#f2f2f2"></div>
<div style="position:absolute;left:289px;top:709px;width:18px;height:18px;background:#dfe2e7"></div>
<div style="position:absolute;left:308px;top:727px;width:704px;height:1px;background:#d3d9e4"></div>
<div style="position:absolute;left:289px;top:727px;width:18px;height:1px;background:#a6a9ae"></div>
<div style="position:absolute;left:308px;top:728px;width:704px;height:18px;background:#a6cdf0"></div>
<div style="position:absolute;left:289px;top:728px;width:18px;height:18px;background:#ffd75e"></div>
<div style="position:absolute;left:308px;top:746px;width:704px;height:1px;background:#d3d9e4"></div>
<div style="position:absolute;left:289px;top:746px;width:18px;height:1px;background:#a6a9ae"></div>
<div style="position:absolute;left:308px;top:747px;width:704px;height:18px;background:#f2f2f2"></div>
<div style="position:absolute;left:289px;top:747px;width:18px;height:18px;background:#dfe2e7"></div>
<div style="position:absolute;left:308px;top:765px;width:704px;height:1px;background:#d3d9e4"></div>
<div style="position:absolute;left:289px;top:765px;width:18px;height:1px;background:#a6a9ae"></div>
<div style="position:absolute;left:308px;top:766px;width:704px;height:18px;background:#ffffff"></div>
<div style="position:absolute;left:289px;top:766px;width:18px;height:18px;background:#dfe2e7"></div>
<div style="position:absolute;left:308px;top:784px;width:704px;height:1px;background:#d3d9e4"></div>
<div style="position:absolute;left:289px;top:784px;width:18px;height:1px;background:#a6a9ae"></div>
<div style="position:absolute;left:308px;top:785px;width:704px;height:18px;background:#f2f2f2"></div>
<div style="position:absolute;left:289px;top:785px;width:18px;height:18px;background:#dfe2e7"></div>
<div style="position:absolute;left:308px;top:803px;width:704px;height:1px;background:#d3d9e4"></div>
<div style="position:absolute;left:289px;top:803px;width:18px;height:1px;background:#a6a9ae"></div>
<div style="position:absolute;left:308px;top:804px;width:704px;height:18px;background:#ffffff"></div>
<div style="position:absolute;left:289px;top:804px;width:18px;height:18px;background:#dfe2e7"></div>
<div style="position:absolute;left:308px;top:822px;width:704px;height:1px;background:#d3d9e4"></div>
<div style="position:absolute;left:289px;top:822px;width:18px;height:1px;background:#a6a9ae"></div>
<div style="position:absolute;left:308px;top:823px;width:704px;height:18px;background:#f2f2f2"></div>
<div style="position:absolute;left:289px;top:823px;width:18px;height:18px;background:#dfe2e7"></div>
<div style="position:absolute;left:308px;top:841px;width:704px;height:1px;background:#d3d9e4"></div>
<div style="position:absolute;left:289px;top:841px;width:18px;height:1px;background:#a6a9ae"></div>
<div style="position:absolute;left:308px;top:842px;width:704px;height:18px;background:#ffffff"></div>
<div style="position:absolute;left:289px;top:842px;width:18px;height:18px;background:#dfe2e7"></div>
<div style="position:absolute;left:308px;top:860px;width:704px;height:1px;background:#d3d9e4"></div>
<div style="position:absolute;left:289px;top:860px;width:18px;height:1px;background:#a6a9ae"></div>
<div style="position:absolute;left:308px;top:861px;width:704px;height:18px;background:#f2f2f2"></div>
<div style="position:absolute;left:289px;top:861px;width:18px;height:18px;background:#dfe2e7"></div>
<div style="position:absolute;left:308px;top:879px;width:704px;height:1px;background:#d3d9e4"></div>
<div style="position:absolute;left:289px;top:879px;width:18px;height:1px;background:#a6a9ae"></div>
<div style="position:absolute;left:307px;top:272px;width:1px;height:590px;background:#a9adb3"></div>
<div style="position:absolute;left:479px;top:272px;width:1px;height:590px;background:#d3d9e4"></div>
<div style="position:absolute;left:637px;top:272px;width:1px;height:590px;background:#d3d9e4"></div>
<div style="position:absolute;left:781px;top:272px;width:1px;height:590px;background:#d3d9e4"></div>
<div style="position:absolute;left:887px;top:272px;width:1px;height:590px;background:#d3d9e4"></div>
<div style="position:absolute;left:1001px;top:272px;width:1px;height:590px;background:#d3d9e4"></div>
<div style="position:absolute;left:311.5px;top:275px;white-space:nowrap;font-family:'Liberation Mono', monospace;color:#000;height:18px;line-height:18px"><span style="font-size:15px;letter-spacing:0;font-weight:300;position:relative;top:-1px;color:#1e1e1e">电动机回路电缆</span></div>
<div style="position:absolute;left:483px;top:275px;white-space:nowrap;font-family:'Liberation Mono', monospace;color:#000;width:153px;overflow:hidden;height:18px;line-height:18px;"><span style="font-size:15px;letter-spacing:-1px;color:#2e2e2e">2D_CABLE_4</span></div>
<div style="position:absolute;left:311.5px;top:294px;white-space:nowrap;font-family:'Liberation Mono', monospace;color:#000;height:18px;line-height:18px"><span style="font-size:15px;letter-spacing:0;font-weight:300;position:relative;top:-1px;color:#1e1e1e">电动机回路电缆</span></div>
<div style="position:absolute;left:483px;top:294px;white-space:nowrap;font-family:'Liberation Mono', monospace;color:#000;width:153px;overflow:hidden;height:18px;line-height:18px;"><span style="font-size:15px;letter-spacing:-1px;color:#2e2e2e">2D_CABLE_2</span></div>
<div style="position:absolute;left:641px;top:294px;white-space:nowrap;font-family:'Liberation Mono', monospace;color:#000;width:139px;overflow:hidden;height:18px;line-height:18px;"><span style="font-size:15px;letter-spacing:-1px;color:#2e2e2e">2D_CABLE_2</span></div>
<div style="position:absolute;left:311.5px;top:313px;white-space:nowrap;font-family:'Liberation Mono', monospace;color:#000;height:18px;line-height:18px"><span style="font-size:15px;letter-spacing:0;font-weight:300;position:relative;top:-1px;color:#1e1e1e">电动机回路电缆</span></div>
<div style="position:absolute;left:483px;top:313px;white-space:nowrap;font-family:'Liberation Mono', monospace;color:#000;width:153px;overflow:hidden;height:18px;line-height:18px;"><span style="font-size:15px;letter-spacing:-1px;color:#2e2e2e">2D_CABLE_2</span></div>
<div style="position:absolute;left:641px;top:313px;white-space:nowrap;font-family:'Liberation Mono', monospace;color:#000;width:139px;overflow:hidden;height:18px;line-height:18px;"><span style="font-size:15px;letter-spacing:-1px;color:#2e2e2e">2D_CABLE_2</span></div>
<div style="position:absolute;left:311.5px;top:332px;white-space:nowrap;font-family:'Liberation Mono', monospace;color:#000;height:18px;line-height:18px"><span style="font-size:15px;letter-spacing:0;font-weight:300;position:relative;top:-1px;color:#1e1e1e">电动机回路电缆</span></div>
<div style="position:absolute;left:483px;top:332px;white-space:nowrap;font-family:'Liberation Mono', monospace;color:#000;width:153px;overflow:hidden;height:18px;line-height:18px;"><span style="font-size:15px;letter-spacing:-1px;color:#2e2e2e">2D_CABLE_4</span></div>
<div style="position:absolute;left:311.5px;top:351px;white-space:nowrap;font-family:'Liberation Mono', monospace;color:#000;height:18px;line-height:18px"><span style="font-size:15px;letter-spacing:0;font-weight:300;position:relative;top:-1px;color:#1e1e1e">电动机回路电缆</span></div>
<div style="position:absolute;left:483px;top:351px;white-space:nowrap;font-family:'Liberation Mono', monospace;color:#000;width:153px;overflow:hidden;height:18px;line-height:18px;"><span style="font-size:15px;letter-spacing:-1px;color:#2e2e2e">2D_CABLE_2</span></div>
<div style="position:absolute;left:641px;top:351px;white-space:nowrap;font-family:'Liberation Mono', monospace;color:#000;width:139px;overflow:hidden;height:18px;line-height:18px;"><span style="font-size:15px;letter-spacing:-1px;color:#2e2e2e">2D_CABLE_2</span></div>
<div style="position:absolute;left:311.5px;top:370px;white-space:nowrap;font-family:'Liberation Mono', monospace;color:#000;height:18px;line-height:18px"><span style="font-size:15px;letter-spacing:0;font-weight:300;position:relative;top:-1px;color:#1e1e1e">电动机回路电缆</span></div>
<div style="position:absolute;left:483px;top:370px;white-space:nowrap;font-family:'Liberation Mono', monospace;color:#000;width:153px;overflow:hidden;height:18px;line-height:18px;"><span style="font-size:15px;letter-spacing:-1px;color:#2e2e2e">2D_CABLE_2</span></div>
<div style="position:absolute;left:641px;top:370px;white-space:nowrap;font-family:'Liberation Mono', monospace;color:#000;width:139px;overflow:hidden;height:18px;line-height:18px;"><span style="font-size:15px;letter-spacing:-1px;color:#2e2e2e">2D_CABLE_2</span></div>
<div style="position:absolute;left:311.5px;top:389px;white-space:nowrap;font-family:'Liberation Mono', monospace;color:#000;height:18px;line-height:18px"><span style="font-size:15px;letter-spacing:0;font-weight:300;position:relative;top:-1px;color:#1e1e1e">电动机回路电缆</span></div>
<div style="position:absolute;left:483px;top:389px;white-space:nowrap;font-family:'Liberation Mono', monospace;color:#000;width:153px;overflow:hidden;height:18px;line-height:18px;"><span style="font-size:15px;letter-spacing:-1px;color:#2e2e2e">2D_CABLE_4</span></div>
<div style="position:absolute;left:311.5px;top:408px;white-space:nowrap;font-family:'Liberation Mono', monospace;color:#000;height:18px;line-height:18px"><span style="font-size:15px;letter-spacing:0;font-weight:300;position:relative;top:-1px;color:#1e1e1e">电动机回路电缆</span></div>
<div style="position:absolute;left:483px;top:408px;white-space:nowrap;font-family:'Liberation Mono', monospace;color:#000;width:153px;overflow:hidden;height:18px;line-height:18px;"><span style="font-size:15px;letter-spacing:-1px;color:#2e2e2e">2D_CABLE_2</span></div>
<div style="position:absolute;left:641px;top:408px;white-space:nowrap;font-family:'Liberation Mono', monospace;color:#000;width:139px;overflow:hidden;height:18px;line-height:18px;"><span style="font-size:15px;letter-spacing:-1px;color:#2e2e2e">2D_CABLE_2</span></div>
<div style="position:absolute;left:311.5px;top:427px;white-space:nowrap;font-family:'Liberation Mono', monospace;color:#000;height:18px;line-height:18px"><span style="font-size:15px;letter-spacing:0;font-weight:300;position:relative;top:-1px;color:#1e1e1e">电动机回路电缆</span></div>
<div style="position:absolute;left:483px;top:427px;white-space:nowrap;font-family:'Liberation Mono', monospace;color:#000;width:153px;overflow:hidden;height:18px;line-height:18px;"><span style="font-size:15px;letter-spacing:-1px;color:#2e2e2e">2D_CABLE_2</span></div>
<div style="position:absolute;left:311.5px;top:446px;white-space:nowrap;font-family:'Liberation Mono', monospace;color:#000;height:18px;line-height:18px"><span style="font-size:15px;letter-spacing:0;font-weight:300;position:relative;top:-1px;color:#1e1e1e">电动机回路电缆</span></div>
<div style="position:absolute;left:483px;top:446px;white-space:nowrap;font-family:'Liberation Mono', monospace;color:#000;width:153px;overflow:hidden;height:18px;line-height:18px;"><span style="font-size:15px;letter-spacing:-1px;color:#2e2e2e">2D_CABLE_4</span></div>
<div style="position:absolute;left:311.5px;top:465px;white-space:nowrap;font-family:'Liberation Mono', monospace;color:#000;height:18px;line-height:18px"><span style="font-size:15px;letter-spacing:0;font-weight:300;position:relative;top:-1px;color:#1e1e1e">电动机回路电缆</span></div>
<div style="position:absolute;left:483px;top:465px;white-space:nowrap;font-family:'Liberation Mono', monospace;color:#000;width:153px;overflow:hidden;height:18px;line-height:18px;"><span style="font-size:15px;letter-spacing:-1px;color:#2e2e2e">2D_CABLE_2</span></div>
<div style="position:absolute;left:641px;top:465px;white-space:nowrap;font-family:'Liberation Mono', monospace;color:#000;width:139px;overflow:hidden;height:18px;line-height:18px;"><span style="font-size:15px;letter-spacing:-1px;color:#2e2e2e">2D_CABLE_2</span></div>
<div style="position:absolute;left:311.5px;top:484px;white-space:nowrap;font-family:'Liberation Mono', monospace;color:#000;height:18px;line-height:18px"><span style="font-size:15px;letter-spacing:0;font-weight:300;position:relative;top:-1px;color:#1e1e1e">电动机回路电缆</span></div>
<div style="position:absolute;left:483px;top:484px;white-space:nowrap;font-family:'Liberation Mono', monospace;color:#000;width:153px;overflow:hidden;height:18px;line-height:18px;"><span style="font-size:15px;letter-spacing:-1px;color:#2e2e2e">2D_CABLE_4</span></div>
<div style="position:absolute;left:311.5px;top:503px;white-space:nowrap;font-family:'Liberation Mono', monospace;color:#000;height:18px;line-height:18px"><span style="font-size:15px;letter-spacing:0;font-weight:300;position:relative;top:-1px;color:#1e1e1e">电动机回路电缆</span></div>
<div style="position:absolute;left:483px;top:503px;white-space:nowrap;font-family:'Liberation Mono', monospace;color:#000;width:153px;overflow:hidden;height:18px;line-height:18px;"><span style="font-size:15px;letter-spacing:-1px;color:#2e2e2e">CABLE_3C_C</span></div>
<div style="position:absolute;left:311.5px;top:522px;white-space:nowrap;font-family:'Liberation Mono', monospace;color:#000;height:18px;line-height:18px"><span style="font-size:15px;letter-spacing:0;font-weight:300;position:relative;top:-1px;color:#1e1e1e">电动机回路电缆</span></div>
<div style="position:absolute;left:483px;top:522px;white-space:nowrap;font-family:'Liberation Mono', monospace;color:#000;width:153px;overflow:hidden;height:18px;line-height:18px;"><span style="font-size:15px;letter-spacing:-1px;color:#2e2e2e">2D_CABLE_4</span></div>
<div style="position:absolute;left:311.5px;top:541px;white-space:nowrap;font-family:'Liberation Mono', monospace;color:#000;height:18px;line-height:18px"><span style="font-size:15px;letter-spacing:0;font-weight:300;position:relative;top:-1px;color:#1e1e1e">电动机回路电缆</span></div>
<div style="position:absolute;left:483px;top:541px;white-space:nowrap;font-family:'Liberation Mono', monospace;color:#000;width:153px;overflow:hidden;height:18px;line-height:18px;"><span style="font-size:15px;letter-spacing:-1px;color:#2e2e2e">2D_CABLE_4</span></div>
<div style="position:absolute;left:311.5px;top:560px;white-space:nowrap;font-family:'Liberation Mono', monospace;color:#000;height:18px;line-height:18px"><span style="font-size:15px;letter-spacing:0;font-weight:300;position:relative;top:-1px;color:#1e1e1e">电动机回路电缆</span></div>
<div style="position:absolute;left:483px;top:560px;white-space:nowrap;font-family:'Liberation Mono', monospace;color:#000;width:153px;overflow:hidden;height:18px;line-height:18px;"><span style="font-size:15px;letter-spacing:-1px;color:#2e2e2e">2D_CABLE_4</span></div>
<div style="position:absolute;left:311.5px;top:579px;white-space:nowrap;font-family:'Liberation Mono', monospace;color:#000;height:18px;line-height:18px"><span style="font-size:15px;letter-spacing:0;font-weight:300;position:relative;top:-1px;color:#1e1e1e">电动机回路电缆</span></div>
<div style="position:absolute;left:483px;top:579px;white-space:nowrap;font-family:'Liberation Mono', monospace;color:#000;width:153px;overflow:hidden;height:18px;line-height:18px;"><span style="font-size:15px;letter-spacing:-1px;color:#2e2e2e">2D_CABLE_4</span></div>
<div style="position:absolute;left:311.5px;top:598px;white-space:nowrap;font-family:'Liberation Mono', monospace;color:#000;height:18px;line-height:18px"><span style="font-size:15px;letter-spacing:0;font-weight:300;position:relative;top:-1px;color:#1e1e1e">电缆</span></div>
<div style="position:absolute;left:483px;top:598px;white-space:nowrap;font-family:'Liberation Mono', monospace;color:#000;width:153px;overflow:hidden;height:18px;line-height:18px;"><span style="font-size:15px;letter-spacing:-1px;color:#2e2e2e">2D_CABLE_3,2D_CABLE_</span></div>
<div style="position:absolute;left:311.5px;top:617px;white-space:nowrap;font-family:'Liberation Mono', monospace;color:#000;height:18px;line-height:18px"><span style="font-size:15px;letter-spacing:0;font-weight:300;position:relative;top:-1px;color:#1e1e1e">电缆</span></div>
<div style="position:absolute;left:483px;top:617px;white-space:nowrap;font-family:'Liberation Mono', monospace;color:#000;width:153px;overflow:hidden;height:18px;line-height:18px;"><span style="font-size:15px;letter-spacing:-1px;color:#2e2e2e">2D_CABLE_3,2D_CABLE_</span></div>
<div style="position:absolute;left:311.5px;top:636px;white-space:nowrap;font-family:'Liberation Mono', monospace;color:#000;height:18px;line-height:18px"><span style="font-size:15px;letter-spacing:0;font-weight:300;position:relative;top:-1px;color:#1e1e1e">电缆</span></div>
<div style="position:absolute;left:483px;top:636px;white-space:nowrap;font-family:'Liberation Mono', monospace;color:#000;width:153px;overflow:hidden;height:18px;line-height:18px;"><span style="font-size:15px;letter-spacing:-1px;color:#2e2e2e">2D_CABLE_3,2D_CABLE_</span></div>
<div style="position:absolute;left:311.5px;top:655px;white-space:nowrap;font-family:'Liberation Mono', monospace;color:#000;height:18px;line-height:18px"><span style="font-size:15px;letter-spacing:0;font-weight:300;position:relative;top:-1px;color:#1e1e1e">电缆</span></div>
<div style="position:absolute;left:483px;top:655px;white-space:nowrap;font-family:'Liberation Mono', monospace;color:#000;width:153px;overflow:hidden;height:18px;line-height:18px;"><span style="font-size:15px;letter-spacing:-1px;color:#2e2e2e">2D_CABLE_3,2D_CABLE_</span></div>
<div style="position:absolute;left:311.5px;top:674px;white-space:nowrap;font-family:'Liberation Mono', monospace;color:#000;height:18px;line-height:18px"><span style="font-size:15px;letter-spacing:0;font-weight:300;position:relative;top:-1px;color:#1e1e1e">灯具</span></div>
<div style="position:absolute;left:311.5px;top:693px;white-space:nowrap;font-family:'Liberation Mono', monospace;color:#000;height:18px;line-height:18px"><span style="font-size:15px;letter-spacing:0;font-weight:300;position:relative;top:-1px;color:#1e1e1e">开关</span></div>
<div style="position:absolute;left:483px;top:712px;white-space:nowrap;font-family:'Liberation Mono', monospace;color:#000;width:153px;overflow:hidden;height:18px;line-height:18px;"><span style="font-size:15px;letter-spacing:-1px;color:#2e2e2e">2D_GIS</span></div>
<div style="position:absolute;left:785px;top:712px;white-space:nowrap;font-family:'Liberation Mono', monospace;color:#000;width:101px;overflow:hidden;height:18px;line-height:18px;"><span style="font-size:15px;letter-spacing:0;font-weight:300;position:relative;top:-1px;color:#1e1e1e">初设</span></div>
<div style="position:absolute;left:483px;top:731px;white-space:nowrap;font-family:'Liberation Mono', monospace;color:#000;width:153px;overflow:hidden;height:18px;line-height:18px;"><span style="font-size:15px;letter-spacing:-1px;color:#2e2e2e">2D_GIS</span></div>
<div style="position:absolute;left:785px;top:731px;white-space:nowrap;font-family:'Liberation Mono', monospace;color:#000;width:101px;overflow:hidden;height:18px;line-height:18px;"><span style="font-size:15px;letter-spacing:0;font-weight:300;position:relative;top:-1px;color:#1e1e1e">初设</span></div>
<div style="position:absolute;left:311.5px;top:750px;white-space:nowrap;font-family:'Liberation Mono', monospace;color:#000;height:18px;line-height:18px"><span style="font-size:15px;letter-spacing:0;font-weight:300;position:relative;top:-1px;color:#1e1e1e">插座</span></div>
<div style="position:absolute;left:311.5px;top:769px;white-space:nowrap;font-family:'Liberation Mono', monospace;color:#000;height:18px;line-height:18px"><span style="font-size:15px;letter-spacing:0;font-weight:300;position:relative;top:-1px;color:#1e1e1e">部件</span></div>
<div style="position:absolute;left:311.5px;top:788px;white-space:nowrap;font-family:'Liberation Mono', monospace;color:#000;height:18px;line-height:18px"><span style="font-size:15px;letter-spacing:0;font-weight:300;position:relative;top:-1px;color:#1e1e1e">充氮灭火消防柜</span></div>
<div style="position:absolute;left:311.5px;top:807px;white-space:nowrap;font-family:'Liberation Mono', monospace;color:#000;height:18px;line-height:18px"><span style="font-size:15px;letter-spacing:0;font-weight:300;position:relative;top:-1px;color:#1e1e1e">电流互感器</span></div>
<div style="position:absolute;left:311.5px;top:826px;white-space:nowrap;font-family:'Liberation Mono', monospace;color:#000;height:18px;line-height:18px"><span style="font-size:15px;letter-spacing:0;font-weight:300;position:relative;top:-1px;color:#1e1e1e">电压互感器</span></div>
<div style="position:absolute;left:311.5px;top:845px;white-space:nowrap;font-family:'Liberation Mono', monospace;color:#000;height:18px;line-height:18px"><span style="font-size:15px;letter-spacing:0;font-weight:300;position:relative;top:-1px;color:#1e1e1e">吊灯</span></div>
<div style="position:absolute;left:353.5px;top:256px;width:80px;overflow:hidden;white-space:nowrap;font-family:'Liberation Mono', monospace;font-size:15px;letter-spacing:-1px;color:#2a2a2a;height:15px;line-height:18px">Category</div>
<div style="position:absolute;left:483px;top:256px;width:137px;overflow:hidden;white-space:nowrap;font-family:'Liberation Mono', monospace;font-size:15px;letter-spacing:-1px;color:#2a2a2a;height:15px;line-height:18px">Single_Line_Symbo</div>
<div style="position:absolute;left:641px;top:256px;width:124px;overflow:hidden;white-space:nowrap;font-family:'Liberation Mono', monospace;font-size:15px;letter-spacing:-1px;color:#2a2a2a;height:15px;line-height:18px">Schematic_Symbol</div>
<div style="position:absolute;left:785px;top:256px;width:86px;overflow:hidden;white-space:nowrap;font-family:'Liberation Mono', monospace;font-size:15px;letter-spacing:-1px;color:#2a2a2a;height:15px;line-height:18px">Manufacturer</div>
<div style="position:absolute;left:891px;top:256px;width:95px;overflow:hidden;white-space:nowrap;font-family:'Liberation Mono', monospace;font-size:15px;letter-spacing:-1px;color:#2a2a2a;height:15px;line-height:18px">Equipment_Number</div>
<div style="position:absolute;left:1005px;top:256px;width:10px;overflow:hidden;white-space:nowrap;font-family:'Liberation Mono', monospace;font-size:15px;letter-spacing:-1px;color:#2a2a2a;height:15px;line-height:18px">ID</div>
<svg style="position:absolute;left:625px;top:261px;" width="7" height="4" viewBox="0 0 7 4"><path d="M0.5 0.5 H6.5 L3.5 3.5 Z" fill="#1a2430"/></svg>
<svg style="position:absolute;left:769px;top:261px;" width="7" height="4" viewBox="0 0 7 4"><path d="M0.5 0.5 H6.5 L3.5 3.5 Z" fill="#1a2430"/></svg>
<svg style="position:absolute;left:875px;top:261px;" width="7" height="4" viewBox="0 0 7 4"><path d="M0.5 0.5 H6.5 L3.5 3.5 Z" fill="#1a2430"/></svg>
<svg style="position:absolute;left:989px;top:261px;" width="7" height="4" viewBox="0 0 7 4"><path d="M0.5 0.5 H6.5 L3.5 3.5 Z" fill="#1a2430"/></svg>
<svg style="position:absolute;left:464px;top:259px;" width="11" height="10" viewBox="0 0 11 10"><path d="M0.5 2.5 H5.5 L3 5 Z" fill="#1a2430"/><path d="M8 1 V9 M6 3 L8 1 L10 3" fill="none" stroke="#1a2430" stroke-width="1"/></svg>
<div style="position:absolute;left:450px;top:722px;width:181px;height:36px;box-sizing:border-box;border:2px solid #e51e25;border-radius:19px/18px"></div>
</body></html>
